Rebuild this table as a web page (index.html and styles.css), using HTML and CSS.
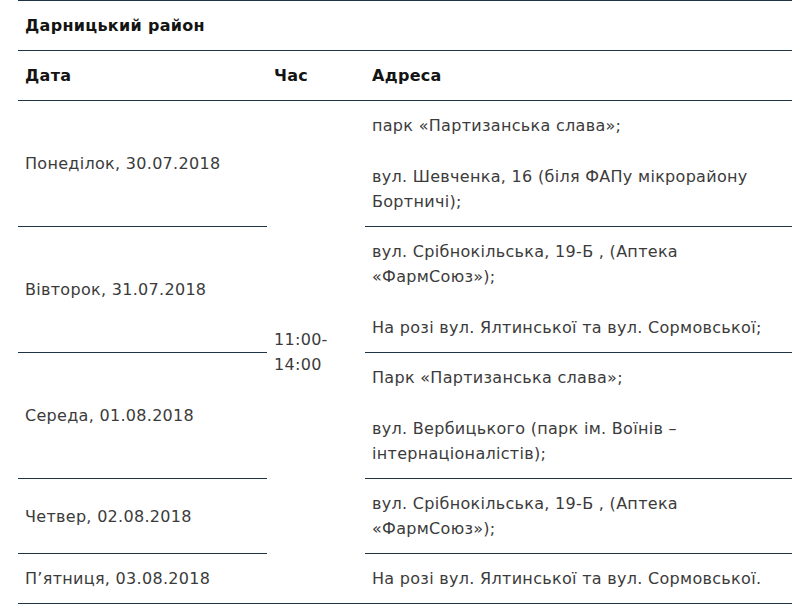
FILE: index.html
```html
<!DOCTYPE html>
<html lang="uk">
<head>
<meta charset="utf-8">
<title>Дарницький район</title>
<link rel="stylesheet" href="styles.css">
</head>
<body>
<table class="schedule">
  <colgroup>
    <col class="col-date">
    <col class="col-time">
    <col class="col-addr">
  </colgroup>
  <thead>
    <tr><th class="district" colspan="3">Дарницький район</th></tr>
    <tr class="head"><th>Дата</th><th>Час</th><th>Адреса</th></tr>
  </thead>
  <tbody>
    <tr>
      <td class="date">Понеділок, 30.07.2018</td>
      <td class="time" rowspan="5">11:00-14:00</td>
      <td class="addr"><p>парк «Партизанська слава»;</p><p>вул. Шевченка, 16 (біля ФАПу мікрорайону Бортничі);</p></td>
    </tr>
    <tr>
      <td class="date">Вівторок, 31.07.2018</td>
      <td class="addr"><p>вул. Срібнокільська, 19-Б , (Аптека<br>«ФармСоюз»);</p><p>На розі вул. Ялтинської та вул. Сормовської;</p></td>
    </tr>
    <tr>
      <td class="date">Середа, 01.08.2018</td>
      <td class="addr"><p>Парк «Партизанська слава»;</p><p>вул. Вербицького (парк ім. Воїнів –<br>інтернаціоналістів);</p></td>
    </tr>
    <tr>
      <td class="date">Четвер, 02.08.2018</td>
      <td class="addr"><p>вул. Срібнокільська, 19-Б , (Аптека<br>«ФармСоюз»);</p></td>
    </tr>
    <tr>
      <td class="date">П’ятниця, 03.08.2018</td>
      <td class="addr"><p>На розі вул. Ялтинської та вул. Сормовської.</p></td>
    </tr>
  </tbody>
</table>
</body>
</html>
```
FILE: styles.css
```css
html, body {
  margin: 0;
  padding: 0;
  background: #ffffff;
}

body {
  padding: 0 15px 0 18px;
  font-family: "DejaVu Sans", "Noto Sans", sans-serif;
  font-size: 16px;
  line-height: 25px;
  color: #3b3b3b;
  letter-spacing: 0.3px;
}

.schedule {
  width: 774px;
  border-collapse: separate;
  border-spacing: 0;
  table-layout: fixed;
}

.col-date { width: 249px; }
.col-time { width: 98px; }
.col-addr { width: 427px; }

.schedule th,
.schedule td {
  padding: 12px 7px;
  border-bottom: 1px solid #1f3444;
  text-align: left;
  vertical-align: middle;
}

.schedule th {
  font-weight: 700;
  color: #141414;
  height: 24px;
}

.district {
  border-top: 1px solid #1f3444;
}

.time {
  padding-right: 6px;
  padding-left: 6px;
}

.addr p {
  margin: 0;
}

.addr p + p {
  margin-top: 26px;
}
```
